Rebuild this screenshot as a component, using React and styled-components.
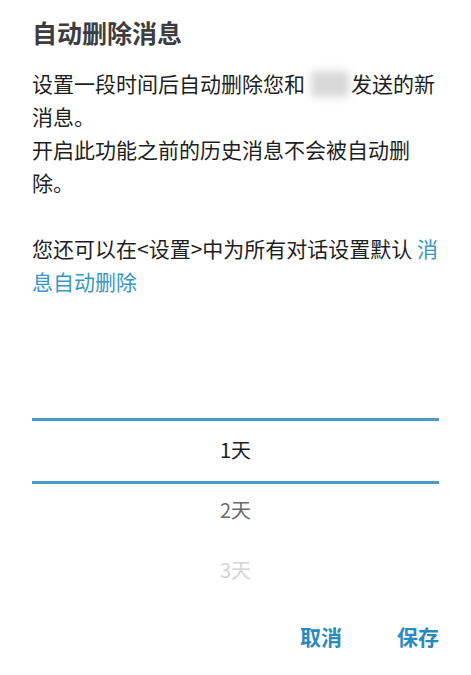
import React, { useState } from 'react';
import styled, { createGlobalStyle } from 'styled-components';

const GlobalStyle = createGlobalStyle`
  html, body {
    margin: 0;
    padding: 0;
    background: #fff;
  }
  body {
    font-family: "Noto Sans CJK SC", "Noto Sans", sans-serif;
  }
`

const Dialog = styled.div`
  width: 471px;
  height: 675px;
  box-sizing: border-box;
  padding: 16px 32px 0 32px;
  display: flex;
  flex-direction: column;
  background: #fff;
`

const Title = styled.h1`
  margin: 0;
  font-size: 25px;
  line-height: 32px;
  font-weight: 700;
  color: #3d3d3d;
`

const Body = styled.div`
  margin-top: 19px;
  font-size: 21px;
  line-height: 33px;
  color: #1e1e1e;
`

const Para = styled.p`
  margin: 0 0 ${p => (p.$gap ? '33px' : '0')} 0;
`

const Blurred = styled.span`
  display: inline-block;
  width: 38px;
  height: 26px;
  margin: 0 2px 0 6px;
  vertical-align: -5px;
  background: #d8d8d8;
  border-radius: 4px;
  filter: blur(4px);
`

const Link = styled.a`
  color: #3a95c6;
  text-decoration: none;
  cursor: pointer;
`

const Picker = styled.div`
  position: relative;
  height: 300px;
  overflow: hidden;
  margin-top: 1px;
`

const Row = styled.div`
  height: 60px;
  display: flex;
  align-items: center;
  justify-content: center;
  font-size: 20px;
  color: ${p => p.$color};
  cursor: pointer;
`

const SelectedBand = styled.div`
  position: absolute;
  left: 0;
  right: 0;
  top: 119px;
  height: 60px;
  border-top: 3px solid #4a9cc6;
  border-bottom: 3px solid #4a9cc6;
  pointer-events: none;
`

const Actions = styled.div`
  display: flex;
  justify-content: flex-end;
  gap: 55px;
  margin-top: 17px;
`

const Action = styled.button`
  background: none;
  border: none;
  padding: 0;
  font-family: inherit;
  font-size: 21px;
  line-height: 40px;
  font-weight: 700;
  color: #2b89c1;
  cursor: pointer;
`

const options = ['1天', '2天', '3天', '4天', '5天', '6天', '7天'];
const shades = ['#1e1e1e', '#6a6a6a', '#d4d4d4', '#f0f0f0'];

export default function App() {
  const [selected, setSelected] = useState(0);
  const rows = [null, null, ...options];
  const visible = rows.slice(selected, selected + 5);

  return (
    <>
      <GlobalStyle />
      <Dialog>
        <Title>自动删除消息</Title>
        <Body>
          <Para>
            设置一段时间后自动删除您和<Blurred />发送的新消息。
          </Para>
          <Para $gap>开启此功能之前的历史消息不会被自动删除。</Para>
          <Para>
            您还可以在&lt;设置&gt;中为所有对话设置默认 <Link>消息自动删除</Link>
          </Para>
        </Body>
        <Picker>
          {visible.map((item, i) => {
            const dist = Math.abs(i - 2);
            return (
              <Row
                key={i}
                $color={shades[dist]}
                onClick={() => item && setSelected(options.indexOf(item))}
              >
                {item}
              </Row>
            );
          })}
          <SelectedBand />
        </Picker>
        <Actions>
          <Action>取消</Action>
          <Action>保存</Action>
        </Actions>
      </Dialog>
    </>
  );
}
